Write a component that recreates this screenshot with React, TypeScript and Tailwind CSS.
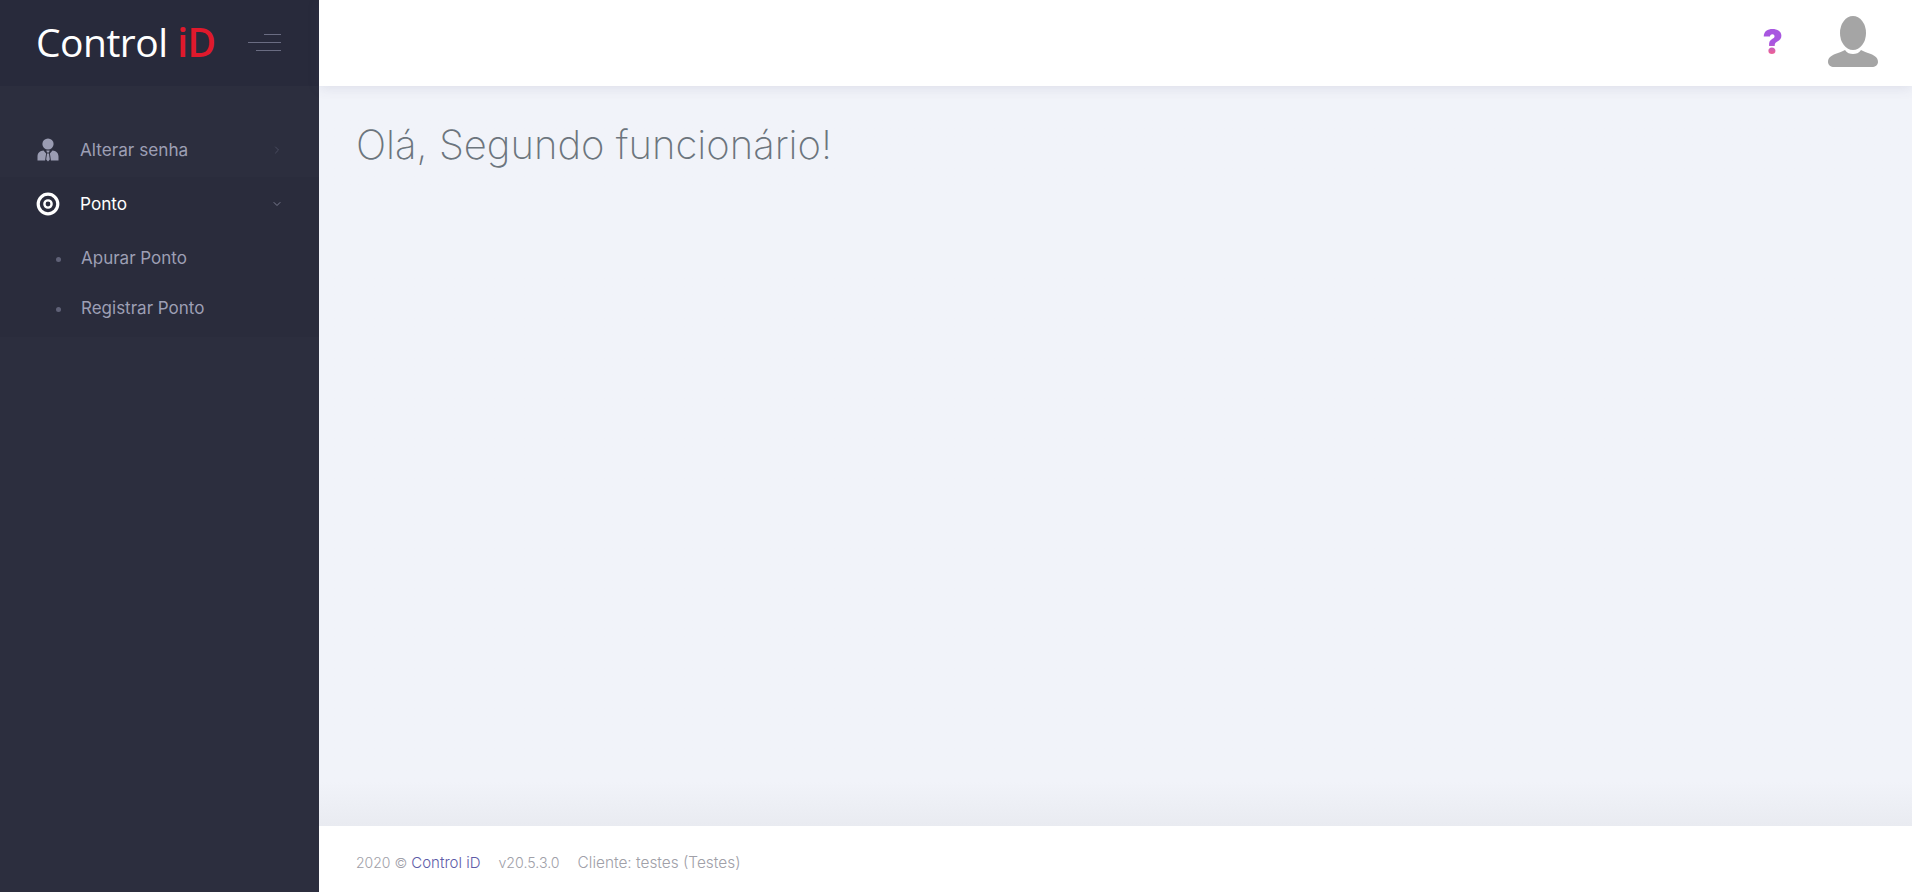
import { ChevronDown, ChevronRight } from "lucide-react";

const font = { fontFamily: "Inter, Lato, sans-serif" };

function UserTieIcon() {
  return (
    <svg viewBox="0 0 22 24" className="h-6 w-[22px] fill-[#9a9cb2]">
      <circle cx="11" cy="6" r="5.600" />
      <path d="M0.500 23.500v-5c0-3.600 2.600-5.600 6-6l2.600 3-1 7h-7.600zM21.500 23.500v-5c0-3.600-2.600-5.600-6-6l-2.600 3 1 7h7.600zM9.300 12.600h3.400l-0.700 2h-2z" />
      <path d="M10 15.500h2l0.800 6-1.800 2-1.800-2z" />
    </svg>
  );
}

function TargetIcon() {
  return (
    <svg viewBox="0 0 24 24" className="h-6 w-6">
      <circle cx="12" cy="12" r="9.800" fill="none" stroke="#fff" strokeWidth="3.200" />
      <circle cx="12" cy="12" r="3.600" fill="none" stroke="#fff" strokeWidth="2.400" />
    </svg>
  );
}

function AvatarIcon() {
  return (
    <svg viewBox="0 0 52 52" className="h-[52px] w-[52px] fill-[#a5a5a5]">
      <ellipse cx="26" cy="17" rx="13" ry="17" />
      <path d="M1 46c0-5 4-7 10-9 3-1 5-2 7-3 2 3 5 4 8 4s6-1 8-4c2 1 4 2 7 3 6 2 10 4 10 9 0 3-3 5-6 5H7c-3 0-6-2-6-5z" />
    </svg>
  );
}

function SubItem({ label }: { label: string }) {
  return (
    <a className="flex h-[50px] items-center pl-[56px] text-[17px] text-[#9d9fb4]">
      <span className="mr-[20px] h-[5px] w-[5px] rounded-full bg-[#5f6177]" />
      {label}
    </a>
  );
}

export default function App() {
  return (
    <div className="flex h-[892px] w-full overflow-hidden bg-[#f1f3f9]" style={font}>
      <aside className="flex w-[319px] shrink-0 flex-col bg-[#2c2e3e]">
        <div className="flex h-[86px] shrink-0 items-center bg-[#282a3b] pb-[2px] pl-[36px]">
          <span className="-mt-[2px] text-[39px] leading-none tracking-[-0.5px] text-white" style={{ fontFamily: "'Open Sans', sans-serif" }}>
            Control <span className="font-semibold text-[#e0192c]">iD</span>
          </span>
          <div className="ml-[32px] flex w-[33px] flex-col items-end gap-[7px]">
            <span className="h-px w-[17px] bg-[#6a6c82]" />
            <span className="h-px w-[33px] bg-[#6a6c82]" />
            <span className="h-px w-[25px] bg-[#6a6c82]" />
          </div>
        </div>
        <nav className="pt-[36px]">
          <a className="flex h-[55px] items-center pl-[37px] pr-[36px] text-[17.200px] text-[#9d9fb4]">
            <UserTieIcon />
            <span className="ml-[21px] flex-1">Alterar senha</span>
            <ChevronRight className="h-3 w-3 text-[#4a4c60]" />
          </a>
          <div className="bg-[#2a2c3c] pb-[3px]">
            <a className="flex h-[55px] items-center pb-[1px] pl-[36px] pr-[36px] text-[17.200px] text-white">
              <TargetIcon />
              <span className="ml-[20px] flex-1">Ponto</span>
              <ChevronDown className="h-3 w-3 text-[#7a7c90]" />
            </a>
            <div className="pt-[2px]">
              <SubItem label="Apurar Ponto" />
              <SubItem label="Registrar Ponto" />
            </div>
          </div>
        </nav>
      </aside>
      <div className="flex min-w-0 flex-1 flex-col">
        <header className="z-10 flex h-[86px] shrink-0 items-center justify-end bg-white pb-[2px] pr-[33px] shadow-[0_2px_12px_rgba(80,85,120,0.12)]">
          <span className="mr-[44px] bg-gradient-to-b from-[#a856e0] from-55% to-[#e8609a] to-80% bg-clip-text text-[34px] font-black leading-none text-transparent">?</span>
          <AvatarIcon />
        </header>
        <main className="flex-1 bg-gradient-to-b from-[#f1f3f9] from-[94%] to-[#e9ebf1] pl-[37px] pt-[35px]">
          <h1 className="text-[40px] font-extralight leading-[1.2] text-[#6c757d]">Olá, Segundo funcionário!</h1>
        </main>
        <footer className="flex h-[66px] shrink-0 items-center bg-white pl-[37px] pt-[8px] text-[14.500px] font-light text-[#a0a0a8]">
          <span>
            <span className="text-[14px]">2020 ©</span> <a className="text-[15px] text-[#5e5ca8]">Control iD</a>
          </span>
          <span className="ml-[18px] text-[14.200px]">v20.5.3.0</span>
          <span className="ml-[18px] text-[15.400px]">Cliente: testes (Testes)</span>
        </footer>
      </div>
    </div>
  );
}
